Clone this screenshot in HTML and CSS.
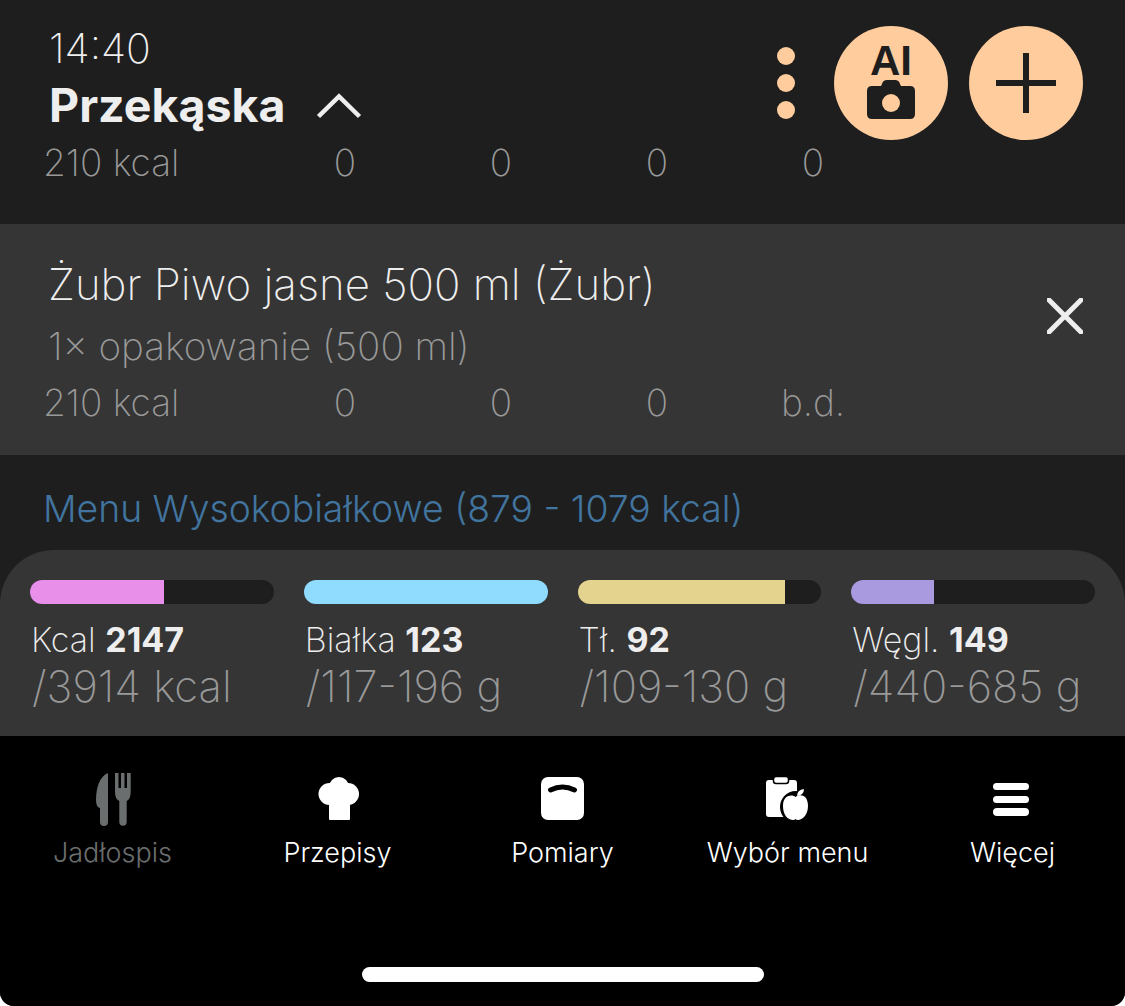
FILE: index.html
```html
<!DOCTYPE html>
<html lang="pl">
<head>
    <meta charset="UTF-8">
    <meta name="viewport" content="width=device-width, initial-scale=1.0">
    <title>Jadłospis</title>
    <link rel="stylesheet" href="styles.css">
</head>
<body>
    <div class="app">
        <!-- Meal header -->
        <header class="meal">
            <div class="meal-top">
                <div class="meal-info">
                    <p class="meal-time">14:40</p>
                    <h1 class="meal-title">
                        Przekąska
                        <svg class="chevron" viewBox="0 0 46 26" width="46" height="26">
                            <path d="M2.5 23.5 L23 3.5 L43.5 23.5" fill="none" stroke="#eee" stroke-width="4.5"/>
                        </svg>
                    </h1>
                </div>
                <div class="meal-actions">
                    <div class="dots">
                        <span class="dot"></span>
                        <span class="dot"></span>
                        <span class="dot"></span>
                    </div>
                    <button class="round-btn ai-btn">
                        <span class="ai-text">AI</span>
                        <svg viewBox="0 0 48 40" width="48" height="40">
                            <path d="M15 5 Q16 1 20 1 H28 Q32 1 33 5 L34 7 H43 Q48 7 48 12 V35 Q48 40 43 40 H5 Q0 40 0 35 V12 Q0 7 5 7 H14 Z" fill="#1e1e1e"/>
                            <circle cx="24" cy="24" r="9" fill="#ffcc9e"/>
                        </svg>
                    </button>
                    <button class="round-btn">
                        <svg viewBox="0 0 60 60" width="60" height="60">
                            <path d="M30 0 V60 M0 30 H60" stroke="#1e1e1e" stroke-width="6"/>
                        </svg>
                    </button>
                </div>
            </div>
            <div class="macros">
                <span class="macro-kcal">210 kcal</span>
                <span>0</span>
                <span>0</span>
                <span>0</span>
                <span>0</span>
            </div>
        </header>

        <!-- Selected product -->
        <section class="item">
            <div class="item-head">
                <div>
                    <p class="item-name">Żubr Piwo jasne 500 ml (Żubr)</p>
                    <p class="item-portion">1× opakowanie (500 ml)</p>
                </div>
                <svg class="close-icon" viewBox="0 0 36 36" width="36" height="36">
                    <path d="M2 2 L34 34 M34 2 L2 34" stroke="#eee" stroke-width="5" stroke-linecap="round"/>
                </svg>
            </div>
            <div class="macros">
                <span class="macro-kcal">210 kcal</span>
                <span>0</span>
                <span>0</span>
                <span>0</span>
                <span>b.d.</span>
            </div>
        </section>

        <p class="menu-link">Menu Wysokobiałkowe (879 - 1079 kcal)</p>

        <!-- Daily summary -->
        <section class="summary">
            <div class="stat">
                <div class="bar"><div class="bar-fill pink" style="width: 55%"></div></div>
                <p class="stat-label">Kcal <b>2147</b></p>
                <p class="stat-limit">/3914 kcal</p>
            </div>
            <div class="stat">
                <div class="bar"><div class="bar-fill blue" style="width: 100%"></div></div>
                <p class="stat-label">Białka <b>123</b></p>
                <p class="stat-limit">/117-196 g</p>
            </div>
            <div class="stat">
                <div class="bar"><div class="bar-fill yellow" style="width: 85%"></div></div>
                <p class="stat-label">Tł. <b>92</b></p>
                <p class="stat-limit">/109-130 g</p>
            </div>
            <div class="stat">
                <div class="bar"><div class="bar-fill purple" style="width: 34%"></div></div>
                <p class="stat-label">Węgl. <b>149</b></p>
                <p class="stat-limit">/440-685 g</p>
            </div>
        </section>

        <!-- Bottom navigation -->
        <nav class="nav">
            <div class="tabs">
                <div class="tab tab-active">
                    <svg viewBox="0 0 54 54" width="54" height="54">
                        <path d="M22 1 V50 a4 4 0 0 1 -8 0 V36 Q10 35 10 28 C10 15 14 4 22 1 Z" fill="#6b6e6e"/>
                        <path d="M29 1 H32.5 V16 H35 V1 H38.5 V16 H41 V1 H44.7 V20 Q44.7 27 40.7 29 V50 a3.7 3.7 0 0 1 -7.4 0 V29 Q29 27 29 20 Z" fill="#6b6e6e"/>
                    </svg>
                    <span>Jadłospis</span>
                </div>
                <div class="tab">
                    <svg viewBox="0 0 54 54" width="54" height="54">
                        <circle cx="28" cy="15" r="10" fill="#fff"/>
                        <circle cx="18.5" cy="22" r="11" fill="#fff"/>
                        <circle cx="37" cy="22" r="11" fill="#fff"/>
                        <rect x="18" y="20" width="21" height="28" rx="1" fill="#fff"/>
                    </svg>
                    <span>Przepisy</span>
                </div>
                <div class="tab">
                    <svg viewBox="0 0 54 54" width="54" height="54">
                        <rect x="5" y="5" width="43" height="43" rx="7" fill="#fff"/>
                        <path d="M14.5 18 Q26.5 12 38.5 18" fill="none" stroke="#000" stroke-width="5" stroke-linecap="round"/>
                    </svg>
                    <span>Pomiary</span>
                </div>
                <div class="tab">
                    <svg viewBox="0 0 54 54" width="54" height="54">
                        <rect x="5" y="8" width="31" height="37" rx="3" fill="#fff"/>
                        <rect x="12.5" y="4.5" width="15" height="7" rx="2.5" fill="#fff" stroke="#000" stroke-width="1.5"/>
                        <ellipse cx="34.5" cy="35" rx="15.5" ry="16" fill="#000"/>
                        <path d="M34.5 25 C38 22 47 22 47 34 C47 43 41 48 37 48 Q35 48 34.5 47 Q34 48 32 48 C27 48 22 43 22 34 C22 23 31 22 34.5 25 Z" fill="#fff"/>
                        <path d="M36 24 Q36 18 43 17 Q43 23 36 24 Z" fill="#fff"/>
                    </svg>
                    <span>Wybór menu</span>
                </div>
                <div class="tab">
                    <svg viewBox="0 0 54 54" width="54" height="54">
                        <rect x="7" y="11" width="36" height="7" rx="3.5" fill="#fff"/>
                        <rect x="7" y="24" width="36" height="7" rx="3.5" fill="#fff"/>
                        <rect x="7" y="36" width="36" height="8" rx="4" fill="#fff"/>
                    </svg>
                    <span>Więcej</span>
                </div>
            </div>
            <div class="home-bar"></div>
        </nav>
    </div>
</body>
</html>
```

FILE: styles.css
```css
body {
    margin: 0;
    background-color: #fff;
    font-family: Inter, Lato, sans-serif;
    font-weight: 300;
}

p, h1 {
    margin: 0;
}

.app {
    display: flex;
    flex-direction: column;
    height: 1006px;
    background-color: #1e1e1e;
    border-radius: 0 0 14px 14px;
    overflow: hidden;
}

/* Meal header */
.meal {
    height: 224px;
    box-sizing: border-box;
    padding-top: 26px;
}

.meal-top {
    display: flex;
    justify-content: space-between;
    padding: 0 42px 0 49px;
}

.meal-time {
    color: #eee;
    font-size: 41px;
    font-weight: 200;
    line-height: 44px;
}

.meal-title {
    display: flex;
    align-items: center;
    gap: 31px;
    margin-top: 8px;
    color: #eee;
    font-size: 46.5px;
    font-weight: 700;
    line-height: 54px;
}

.chevron {
    margin-top: 2px;
}

.meal-actions {
    display: flex;
    align-items: center;
}

.dots {
    display: flex;
    flex-direction: column;
    gap: 9px;
    margin-right: 39px;
}

.dot {
    width: 18px;
    height: 18px;
    border-radius: 50%;
    background-color: #ffcc9e;
}

.round-btn {
    display: flex;
    flex-direction: column;
    align-items: center;
    justify-content: center;
    width: 114px;
    height: 114px;
    padding: 0;
    border: none;
    border-radius: 50%;
    background-color: #ffcc9e;
}

.round-btn + .round-btn {
    margin-left: 21px;
}

.ai-text {
    margin-top: -4px;
    color: #1e1e1e;
    font-family: "Liberation Sans", Arial, sans-serif;
    font-size: 42px;
    font-weight: 700;
    line-height: 36px;
}

.macros {
    display: grid;
    grid-template-columns: 224px repeat(4, 156px);
    justify-items: center;
    padding-left: 43px;
    margin-top: 1px;
    color: #999;
    font-size: 37px;
    font-weight: 200;
    line-height: 44px;
}

.macro-kcal {
    justify-self: start;
}

/* Selected product */
.item {
    height: 231px;
    box-sizing: border-box;
    padding-top: 36px;
    background-color: #353535;
}

.item-head {
    display: flex;
    justify-content: space-between;
    align-items: center;
    padding: 0 42px 0 48px;
}

.item-name {
    color: #eee;
    font-size: 43.8px;
    font-weight: 200;
    line-height: 50px;
}

.item-portion {
    margin-top: 11px;
    color: #999;
    font-size: 38.6px;
    font-weight: 200;
    line-height: 50px;
}

.item .macros {
    margin-top: 10px;
}

.menu-link {
    height: 95px;
    box-sizing: border-box;
    padding: 31px 0 0 43px;
    color: #41749f;
    font-size: 37.3px;
    line-height: 46px;
}

/* Daily summary */
.summary {
    display: grid;
    grid-template-columns: repeat(4, 1fr);
    gap: 30px;
    height: 186px;
    box-sizing: border-box;
    padding: 30px 30px 0;
    background-color: #353535;
    border-radius: 54px 54px 0 0;
}

.bar {
    height: 24px;
    border-radius: 12px;
    background-color: #1e1e1e;
    overflow: hidden;
}

.bar-fill {
    height: 100%;
}

.pink { background-color: #e88fea; }
.blue { background-color: #8fdcff; }
.yellow { background-color: #e3d38f; }
.purple { background-color: #a99ae0; }

.stat-label {
    margin-top: 14px;
    padding-left: 1px;
    color: #eee;
    font-size: 34px;
    font-weight: 200;
    line-height: 44px;
    white-space: nowrap;
}

.stat-label b {
    font-weight: 700;
}

.stat-limit {
    padding-left: 2px;
    color: #999;
    font-size: 43.5px;
    font-weight: 200;
    line-height: 48px;
    white-space: nowrap;
}

/* Bottom navigation */
.nav {
    display: flex;
    flex: 1;
    flex-direction: column;
    background-color: #000;
}

.tabs {
    display: grid;
    grid-template-columns: repeat(5, 1fr);
    padding-top: 36px;
}

.tab {
    display: flex;
    flex-direction: column;
    align-items: center;
    gap: 11px;
    color: #fff;
    font-size: 27px;
    font-weight: 300;
    line-height: 32px;
    white-space: nowrap;
}

.tab-active {
    color: #6b6e6e;
}

.home-bar {
    width: 402px;
    height: 15px;
    margin: auto auto 24px;
    border-radius: 8px;
    background-color: #fff;
}
```
